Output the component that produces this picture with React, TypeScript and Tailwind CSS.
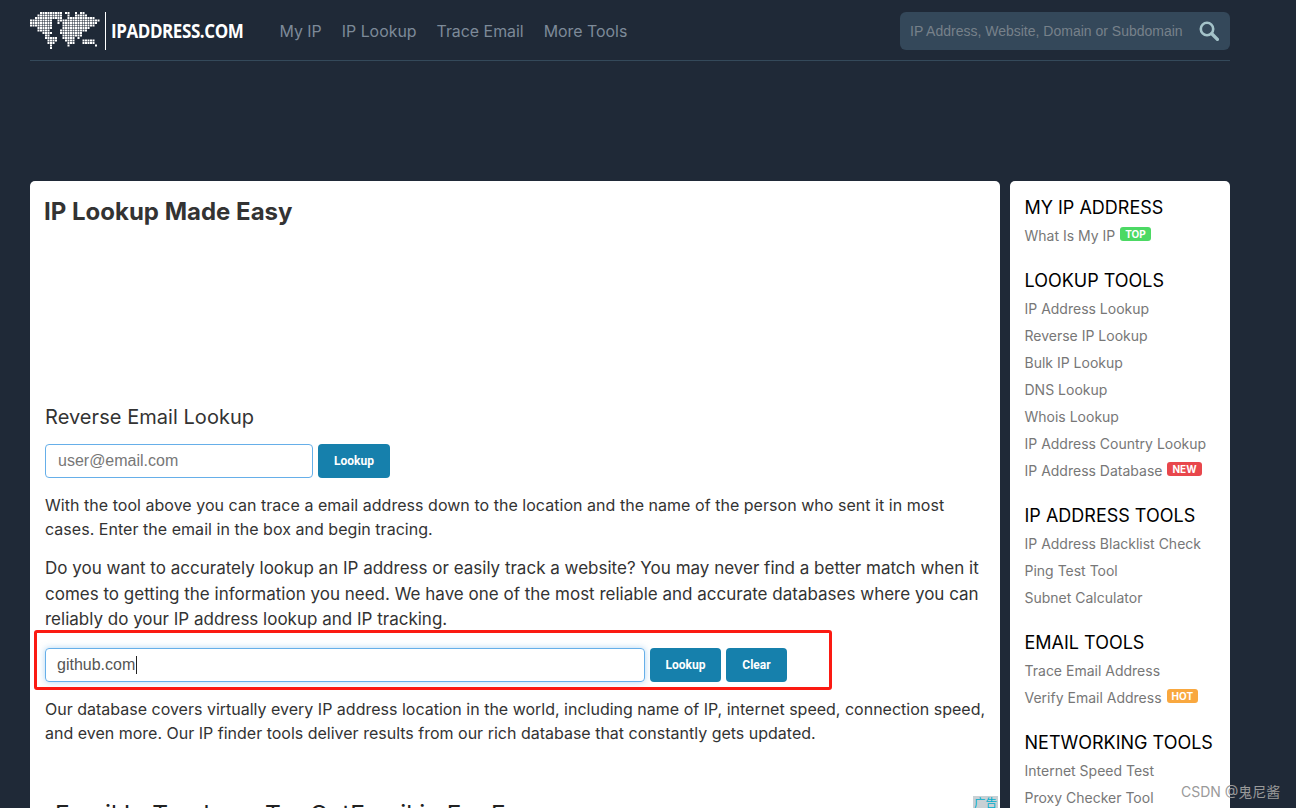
const font = { fontFamily: 'Inter, "Noto Sans CJK SC", sans-serif' }
const arial = { fontFamily: '"Liberation Sans", sans-serif' }

// dot map of the logo: [from, to] columns per row
const MAP_ROWS: [number, number][][] = [
  [[4, 12], [14, 15], [18, 18], [20, 21]],
  [[3, 12], [15, 15], [18, 22]],
  [[2, 9], [10, 12], [15, 25]],
  [[0, 8], [11, 12], [13, 27]],
  [[0, 8], [11, 11], [13, 26]],
  [[0, 8], [13, 25]],
  [[3, 8], [13, 23]],
  [[3, 7], [12, 22]],
  [[5, 8], [12, 20]],
  [[6, 7], [13, 20]],
  [[6, 10], [13, 17], [19, 19]],
  [[7, 10], [14, 17], [21, 25]],
  [[7, 9], [15, 17], [21, 25]],
  [[8, 8], [15, 15], [26, 26]],
  [[8, 8]],
]

function WorldLogo() {
  return (
    <svg width="70" height="38" viewBox="0 0 70 38" className="shrink-0">
      {MAP_ROWS.flatMap((row, y) =>
        row.flatMap(([a, b]) =>
          Array.from({ length: b - a + 1 }, (_, i) => (
            <rect key={`${y}-${a + i}`} x={(a + i) * 2.5} y={y * 2.5} width="2" height="2" fill="#fff" />
          )),
        ),
      )}
    </svg>
  )
}

function SearchIcon() {
  return (
    <svg width="20" height="20" viewBox="0 0 20 20" fill="none" stroke="#a4c3c9" className="shrink-0">
      <circle cx="8" cy="8" r="6.2" strokeWidth="2.6" />
      <path d="M12.8 12.8 18.4 18.4" strokeWidth="3.4" strokeLinecap="round" />
    </svg>
  )
}

function Badge({ label, color }: { label: string; color: string }) {
  return (
    <span className={`relative top-[-3px] ml-[5px] inline-block rounded-[3px] px-[5px] text-[10px] leading-[14px] font-bold text-white ${color}`}>
      {label}
    </span>
  )
}

const SIDE: { title: string; links: { text: string; badge?: [string, string] }[] }[] = [
  { title: 'MY IP ADDRESS', links: [{ text: 'What Is My IP', badge: ['TOP', 'bg-[#4cd964]'] }] },
  {
    title: 'LOOKUP TOOLS',
    links: [
      { text: 'IP Address Lookup' },
      { text: 'Reverse IP Lookup' },
      { text: 'Bulk IP Lookup' },
      { text: 'DNS Lookup' },
      { text: 'Whois Lookup' },
      { text: 'IP Address Country Lookup' },
      { text: 'IP Address Database', badge: ['NEW', 'bg-[#e8474c]'] },
    ],
  },
  {
    title: 'IP ADDRESS TOOLS',
    links: [{ text: 'IP Address Blacklist Check' }, { text: 'Ping Test Tool' }, { text: 'Subnet Calculator' }],
  },
  {
    title: 'EMAIL TOOLS',
    links: [{ text: 'Trace Email Address' }, { text: 'Verify Email Address', badge: ['HOT', 'bg-[#f9a83f]'] }],
  },
  { title: 'NETWORKING TOOLS', links: [{ text: 'Internet Speed Test' }, { text: 'Proxy Checker Tool' }] },
]

function Btn({ children, className }: { children: string; className: string }) {
  return (
    <button className={`h-[34px] rounded-[4px] bg-[#1680ac] text-[12px] font-bold text-white ${className}`} style={{ fontFamily: 'Roboto, sans-serif' }}>
      {children}
    </button>
  )
}

export default function App() {
  return (
    <div className="relative h-[808px] overflow-hidden bg-[#1f2937] px-[30px]" style={font}>
      <div className="w-[1200px]">
        <header className="box-border flex h-[61px] items-center border-b border-[#34495a] pt-[2px]">
          <WorldLogo />
          <div className="ml-[5px] h-[38px] w-[1px] bg-white" />
          <div className="ml-[5px] w-[138px] origin-left scale-x-[0.85] text-[20px] font-bold tracking-[-0.5px] whitespace-nowrap text-white" style={{ fontFamily: '"Open Sans", sans-serif' }}>
            IPADDRESS.COM
          </div>
          <nav className="ml-[30.5px] flex gap-[20px] pt-[2px] text-[15.9px] text-[#7d8a99]">
            <span>My IP</span>
            <span>IP Lookup</span>
            <span>Trace Email</span>
            <span>More Tools</span>
          </nav>
          <div className="ml-auto flex h-[38px] w-[330px] items-center rounded-[6px] bg-[#34485a] pl-[10px] pr-[11px]">
            <span className="flex-1 truncate text-[14px] text-[#77818a]" style={arial}>
              IP Address, Website, Domain or Subdomain
            </span>
            <SearchIcon />
          </div>
        </header>

        <div className="mt-[120px] flex gap-[10px]">
          <main className="h-[700px] w-[970px] rounded-t-[5px] bg-white px-[15px] pt-[15px] text-[#333]">
            <h1 className="-ml-[1px] text-[24px] leading-[32px] font-bold">IP Lookup Made Easy</h1>
            <h2 className="mt-[173px] text-[20px] leading-[32px] font-normal tracking-[0.05px]">Reverse Email Lookup</h2>
            <div className="mt-[11px] flex gap-[5px]">
              <div className="flex h-[34px] w-[268px] items-center rounded-[4px] border border-[#66afe9] pl-[12px] text-[16px] text-[#777]" style={arial}>
                user@email.com
              </div>
              <Btn className="w-[72px]">Lookup</Btn>
            </div>
            <p className="mt-[15px] text-[16px] leading-[24px] tracking-[0.034px]">
              With the tool above you can trace a email address down to the location and the name of the person who sent it in most cases. Enter the email in the box and begin tracing.
            </p>
            <p className="mt-[15px] text-[17px] leading-[25.5px]">
              Do you want to accurately lookup an IP address or easily track a website? You may never find a better match when it comes to getting the information you need. We have one of the most reliable and accurate databases where you can reliably do your IP address lookup and IP tracking.
            </p>
            <div className="mt-[15px] flex gap-[5px]">
              <div className="flex h-[34px] w-[600px] items-center rounded-[4px] border border-[#66afe9] pl-[11px] text-[16px] text-[#555] shadow-[0_0_6px_rgba(102,175,233,0.5)]" style={arial}>
                github.com<span className="ml-[1px] h-[18px] w-[1px] bg-[#222]" />
              </div>
              <Btn className="w-[71px]">Lookup</Btn>
              <Btn className="w-[61px]">Clear</Btn>
            </div>
            <p className="mt-[15px] -mr-[4px] text-[16px] leading-[24px]">
              Our database covers virtually every IP address location in the world, including name of IP, internet speed, connection speed, and even more. Our IP finder tools deliver results from our rich database that constantly gets updated.
            </p>
            <div className="relative mt-[53px]">
              <div className="pl-[10px] text-[24.5px] leading-[32px] text-[#222]">Email Ip Tracker - Try GetEmail.io For Free</div>
              <div className="absolute right-[-13px] top-[-2px] bg-[#c8d0d4] px-[1px] text-[11.5px] leading-[14px] text-[#00aecd]">广告</div>
            </div>
          </main>

          <aside className="h-[700px] w-[220px] rounded-t-[5px] bg-white pl-[14.5px] pt-[15px]">
            {SIDE.map((section) => (
              <div key={section.title} className="mb-[20px]">
                <h3 className="text-[18px] leading-[24px] text-black">{section.title}</h3>
                <ul className="mt-[2px]">
                  {section.links.map((link) => (
                    <li key={link.text} className="text-[14px] leading-[27px] whitespace-nowrap text-[#777]">
                      {link.text}
                      {link.badge && <Badge label={link.badge[0]} color={link.badge[1]} />}
                    </li>
                  ))}
                </ul>
              </div>
            ))}
          </aside>
        </div>
      </div>

      <div className="absolute left-[34px] top-[630px] h-[60px] w-[798px] rounded-[3px] border-[3px] border-[#fb1a12]" />
      <div className="absolute left-[1181px] top-[782px] text-[14px] leading-[20px] text-[#9a9a9a]">CSDN @鬼尼酱</div>
    </div>
  )
}
